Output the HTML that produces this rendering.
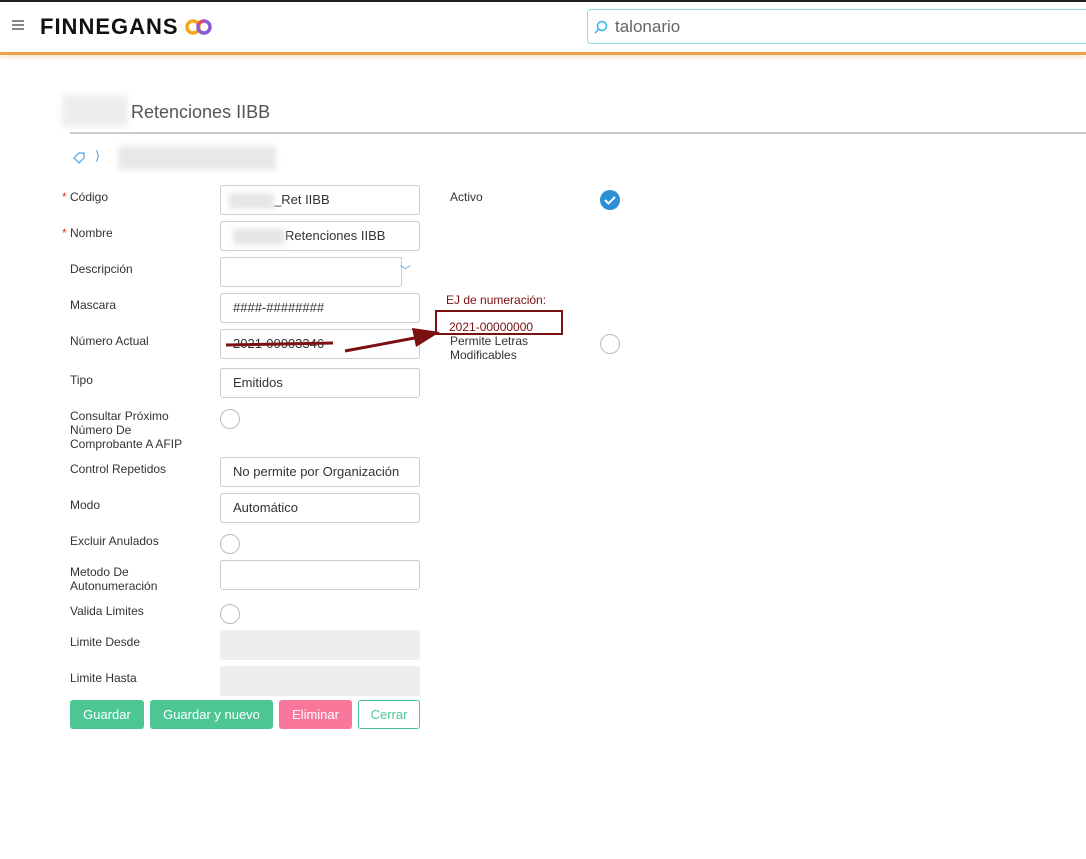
<!DOCTYPE html>
<html><head><meta charset="utf-8"><style>
*{box-sizing:border-box;margin:0;padding:0}
body{width:1086px;height:859px;background:#fff;font-family:"Liberation Sans",sans-serif;position:relative;overflow:hidden;color:#333}
.abs{position:absolute}
.lbl{position:absolute;left:70px;font-size:12px;color:#333;line-height:14px}
.star{color:#e33;position:absolute;left:-8px}
.inp{position:absolute;left:220px;width:200px;height:30px;border:1px solid #ccc;border-radius:3px;font-size:13px;padding:0 12px;line-height:28px;color:#333}
.dis{background:#eee;border-color:#eee}
.radio{position:absolute;width:20px;height:20px;border:1px solid #bbb;border-radius:50%}
.blur{background:#e6e6e6;filter:blur(3px)}
.btn{position:absolute;top:700px;height:29px;font-size:13px;line-height:29px;text-align:center;border-radius:3px;color:#fff}
</style></head><body>
<div class="abs" style="left:0;top:0;width:1086px;height:2px;background:#222"></div>
<div class="abs" style="left:0;top:52px;width:1086px;height:3px;background:#eba04a;box-shadow:0 2px 4px rgba(235,160,74,.4)"></div>
<div class="abs" style="left:12px;top:20px;width:12px;height:1.5px;background:#888;box-shadow:0 4px 0 #888,0 8px 0 #888"></div>
<div class="abs" style="left:40px;top:14px;font-size:22px;font-weight:bold;color:#111;letter-spacing:1px">FINNEGANS</div>
<svg class="abs" style="left:185px;top:18px" width="28" height="18"><circle cx="8" cy="9" r="6" fill="none" stroke="#f7a71b" stroke-width="3.5"/><circle cx="19" cy="9" r="6" fill="none" stroke="#8a5bd6" stroke-width="3.5"/><path d="M14 6a6 6 0 0 1 5-3" stroke="#e84a5f" stroke-width="3.5" fill="none"/></svg>
<div class="abs" style="left:587px;top:9px;width:510px;height:35px;border:1px solid #8fd8f0;border-radius:4px"></div>
<svg class="abs" style="left:594px;top:20px" width="14" height="14"><circle cx="8" cy="6" r="4.5" fill="none" stroke="#2bb7e8" stroke-width="1.5"/><line x1="5" y1="9" x2="1" y2="13" stroke="#2bb7e8" stroke-width="1.5"/></svg>
<div class="abs" style="left:615px;top:17px;font-size:17px;color:#666">talonario</div>

<div class="abs blur" style="left:62px;top:95px;width:66px;height:32px;background:#eee"></div>
<div class="abs" style="left:131px;top:102px;font-size:18px;color:#555">Retenciones IIBB</div>
<div class="abs" style="left:70px;top:132px;width:1016px;height:2px;background:#ccc"></div>
<svg class="abs" style="left:72px;top:151px" width="14" height="14"><path d="M2 7L7 2h5v5l-5 5z" fill="none" stroke="#4aa3e8" stroke-width="1.2"/></svg>
<div class="abs" style="left:95px;top:148px;color:#4aa3e8;font-size:13px">⟩</div>
<div class="abs blur" style="left:118px;top:146px;width:158px;height:24px;background:#e8e8e8"></div>

<div class="lbl" style="top:190px"><span class="star">*</span>Código</div>
<div class="inp" style="top:185px"><span class="blur" style="display:inline-block;width:45px;height:16px;vertical-align:middle;margin-left:-4px"></span>_Ret IIBB</div>
<div class="lbl" style="top:226px"><span class="star">*</span>Nombre</div>
<div class="inp" style="top:221px"><span class="blur" style="display:inline-block;width:52px;height:16px;vertical-align:middle"></span>Retenciones IIBB</div>
<div class="lbl" style="top:262px">Descripción</div>
<div class="inp" style="top:257px;width:182px;border-top-right-radius:0"></div>
<div class="abs" style="left:400px;top:262px;color:#4aa3e8;font-size:11px">﹀</div>
<div class="lbl" style="top:298px">Mascara</div>
<div class="inp" style="top:293px">####-########</div>
<div class="lbl" style="top:334px">Número Actual</div>
<div class="inp" style="top:329px">2021-00003346</div>
<div class="lbl" style="top:373px">Tipo</div>
<div class="inp" style="top:368px">Emitidos</div>
<div class="lbl" style="top:409px">Consultar Próximo<br>Número De<br>Comprobante A AFIP</div>
<div class="radio" style="left:220px;top:409px"></div>
<div class="lbl" style="top:462px">Control Repetidos</div>
<div class="inp" style="top:457px">No permite por Organización</div>
<div class="lbl" style="top:498px">Modo</div>
<div class="inp" style="top:493px">Automático</div>
<div class="lbl" style="top:534px">Excluir Anulados</div>
<div class="radio" style="left:220px;top:534px"></div>
<div class="lbl" style="top:565px">Metodo De<br>Autonumeración</div>
<div class="inp" style="top:560px"></div>
<div class="lbl" style="top:604px">Valida Limites</div>
<div class="radio" style="left:220px;top:604px"></div>
<div class="lbl" style="top:635px">Limite Desde</div>
<div class="inp dis" style="top:630px"></div>
<div class="lbl" style="top:671px">Limite Hasta</div>
<div class="inp dis" style="top:666px"></div>

<div class="btn" style="left:70px;width:74px;background:#4cc793">Guardar</div>
<div class="btn" style="left:150px;width:123px;background:#4cc793">Guardar y nuevo</div>
<div class="btn" style="left:279px;width:73px;background:#f8779a">Eliminar</div>
<div class="btn" style="left:358px;width:62px;background:#fff;border:1px solid #4cc793;color:#4cc793;line-height:27px">Cerrar</div>

<div class="abs" style="left:450px;top:190px;font-size:12px">Activo</div>
<svg class="abs" style="left:600px;top:190px" width="20" height="20"><circle cx="10" cy="10" r="10" fill="#2b8fd6"/><path d="M5 10l3.5 3.5L15 7" stroke="#fff" stroke-width="2" fill="none"/></svg>
<div class="abs" style="left:446px;top:293px;font-size:12px;color:#7a1010">EJ de numeración:</div>
<div class="abs" style="left:435px;top:310px;width:128px;height:25px;border:2.5px solid #7a1010"></div>
<div class="abs" style="left:449px;top:320px;font-size:12px;color:#7a1010">2021-00000000</div>
<div class="abs" style="left:450px;top:334px;font-size:12px;line-height:14px">Permite Letras<br>Modificables</div>
<div class="radio" style="left:600px;top:334px"></div>
<svg class="abs" style="left:0;top:0" width="1086" height="859"><line x1="226" y1="345" x2="333" y2="343" stroke="#7a1010" stroke-width="3"/><line x1="345" y1="351" x2="420" y2="337" stroke="#7a1010" stroke-width="3"/><path d="M412 328L440 332L416 347z" fill="#7a1010"/></svg>
</body></html>
